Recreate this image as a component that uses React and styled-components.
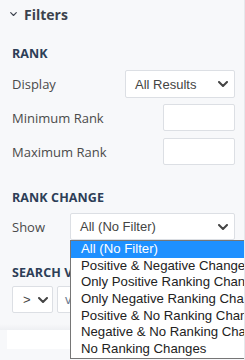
import React from "react";
import styled, { createGlobalStyle } from "styled-components";

const Global = createGlobalStyle`
  html, body { margin: 0; padding: 0; background: #f7f8fa; }
  body { font-family: "Open Sans", "Liberation Sans", sans-serif; }
`;

const Panel = styled.div`
  position: relative;
  width: 245px;
  height: 360px;
  box-sizing: border-box;
  border-right: 1px solid #e6e8ec;
  background: #f7f8fa;
  overflow: hidden;
`;

const Header = styled.div`
  display: flex;
  align-items: center;
  gap: 7px;
  height: 28px;
  padding-left: 10px;
  font-size: 14px;
  font-weight: 700;
  color: #3c424d;
`;

const Body = styled.div`
  padding: 0 9px 0 12px;
  display: flex;
  flex-direction: column;
`;

const SectionTitle = styled.div`
  font-size: 12.5px;
  font-weight: 700;
  color: #2d3e57;
  letter-spacing: 0.1px;
  line-height: 17px;
  margin-top: ${(p) => p.$top}px;
  white-space: nowrap;
`;

const Row = styled.div`
  display: flex;
  align-items: center;
  justify-content: space-between;
  margin-top: ${(p) => p.$top}px;
`;

const Label = styled.span`
  font-size: 13px;
  color: #4a4a4a;
`;

const SelectBox = styled.div`
  box-sizing: border-box;
  width: ${(p) => p.$w}px;
  height: ${(p) => p.$h || 28}px;
  background: #fff;
  border: 1px solid #dcdfe4;
  border-radius: 2px;
  display: flex;
  align-items: center;
  justify-content: space-between;
  padding: 0 ${(p) => p.$pr || 6}px 0 ${(p) => p.$pl || 9}px;
  font-family: "Liberation Sans", Arial, sans-serif;
  font-size: 13px;
  color: #444;
`;

const InputBox = styled.div`
  box-sizing: border-box;
  width: ${(p) => p.$w}px;
  height: 27px;
  background: #fff;
  border: 1px solid #dcdfe4;
  border-radius: 2px;
  font-family: "Liberation Sans", Arial, sans-serif;
  font-size: 13px;
  color: #6b7a90;
  display: flex;
  align-items: center;
  padding-left: 7px;
`;

const SmallRow = styled.div`
  display: flex;
  gap: 4px;
  margin-top: 5px;
`;

const Shadow = styled.div`
  margin-top: 11px;
  height: 6px;
  background: linear-gradient(#f7f8fa, #eef0f3);
`;

const WhiteBox = styled.div`
  margin: 0 0 0 7px;
  height: 19px;
  background: #fff;
`;

const Dropdown = styled.ul`
  position: absolute;
  left: 70px;
  top: 240px;
  width: 190px;
  margin: 0;
  padding: 0;
  list-style: none;
  background: #fff;
  border: 1px solid #767676;
  font-family: "Liberation Sans", Arial, sans-serif;
  font-size: 13.2px;
  color: #111;
`;

const Option = styled.li`
  height: 16.7px;
  line-height: 16.7px;
  padding-left: 10px;
  white-space: nowrap;
  background: ${(p) => (p.$active ? "#1e90ff" : "transparent")};
  color: ${(p) => (p.$active ? "#fff" : "#222")};
`;

const Chevron = ({ size = 10, color = "#333", sw = 2 }) => (
  <svg width={size} height={size * 0.6} viewBox="0 0 10 6">
    <path d="M1 1 L5 5 L9 1" fill="none" stroke={color} strokeWidth={sw} strokeLinecap="round" strokeLinejoin="round" />
  </svg>
);

const options = [
  "All (No Filter)",
  "Positive & Negative Changes",
  "Only Positive Ranking Changes",
  "Only Negative Ranking Changes",
  "Positive & No Ranking Changes",
  "Negative & No Ranking Changes",
  "No Ranking Changes",
];

export default function App() {
  return (
    <>
      <Global />
      <Panel>
        <Header>
          <Chevron size={7} color="#3c424d" sw={1.6} />
          <span>Filters</span>
        </Header>
        <Body>
          <SectionTitle $top={17}>RANK</SectionTitle>
          <Row $top={8}>
            <Label>Display</Label>
            <SelectBox $w={110}>
              <span>All Results</span>
              <Chevron size={10} color="#444" sw={2} />
            </SelectBox>
          </Row>
          <Row $top={6}>
            <Label>Minimum Rank</Label>
            <InputBox $w={72} />
          </Row>
          <Row $top={7}>
            <Label>Maximum Rank</Label>
            <InputBox $w={72} />
          </Row>
          <SectionTitle $top={24}>RANK CHANGE</SectionTitle>
          <Row $top={7}>
            <Label>Show</Label>
            <SelectBox $w={165} $h={27}>
              <span>All (No Filter)</span>
              <Chevron size={10} color="#444" sw={2} />
            </SelectBox>
          </Row>
          <SectionTitle $top={24}>SEARCH VOLUME</SectionTitle>
          <SmallRow>
            <SelectBox $w={41} $h={27} $pl={10} $pr={4}>
              <span>&gt;</span>
              <Chevron size={10} color="#444" sw={2} />
            </SelectBox>
            <InputBox $w={140}>value</InputBox>
          </SmallRow>
        </Body>
        <Shadow />
        <WhiteBox />
        <Dropdown>
          {options.map((o, i) => (
            <Option key={o} $active={i === 0}>
              {o}
            </Option>
          ))}
        </Dropdown>
      </Panel>
    </>
  );
}
